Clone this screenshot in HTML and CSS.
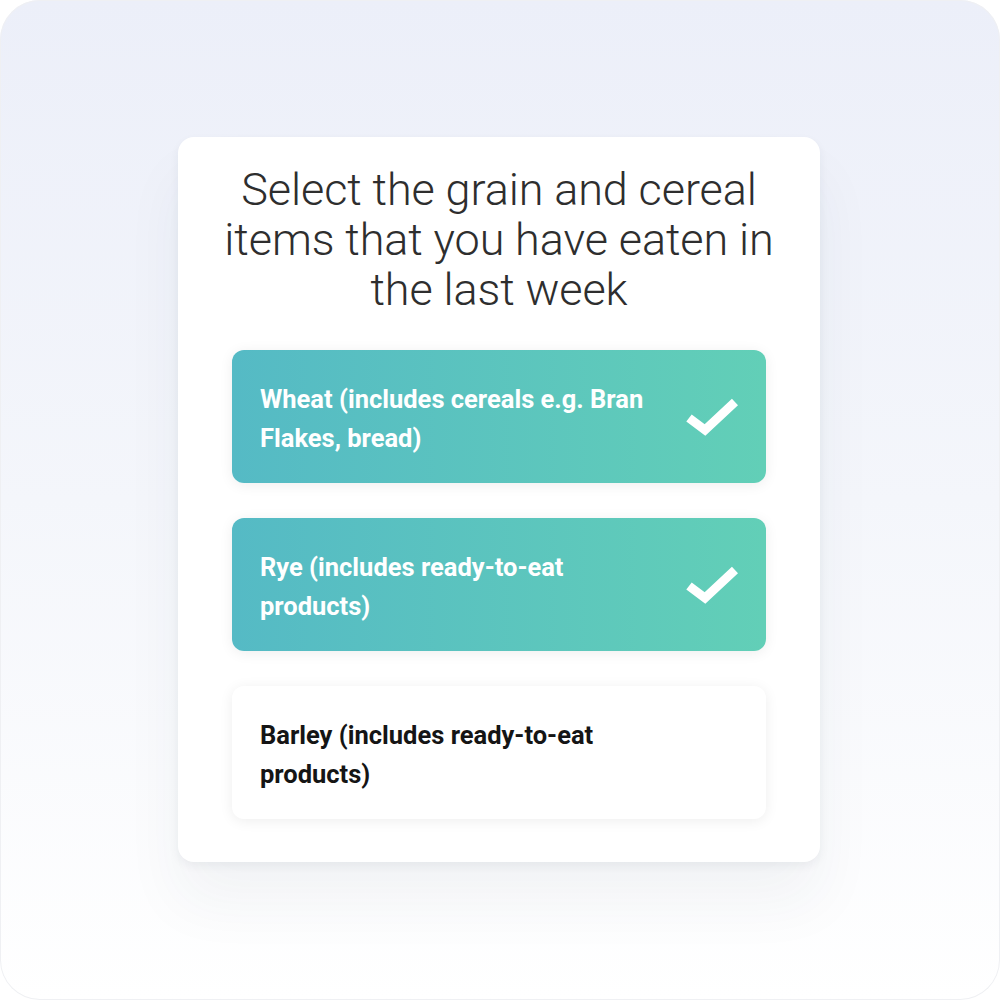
FILE: index.html
```html
<!DOCTYPE html>
<html lang="en">
<head>
<meta charset="utf-8">
<title>Grain and cereal</title>
<link rel="stylesheet" href="styles.css">
</head>
<body>
<div class="frame">
  <div class="card">
    <h1 class="title">Select the grain and cereal items that you have eaten in the last week</h1>
    <div class="options">
      <div class="option selected">
        <span class="label">Wheat (includes cereals e.g. Bran Flakes, bread)</span>
        <svg class="check" viewBox="0 0 52 42" width="52" height="42"><path d="M3 22 L19 34 L49 6" fill="none" stroke="#fff" stroke-width="9" stroke-linejoin="miter" stroke-linecap="butt"/></svg>
      </div>
      <div class="option selected">
        <span class="label">Rye (includes ready-to-eat products)</span>
        <svg class="check" viewBox="0 0 52 42" width="52" height="42"><path d="M3 22 L19 34 L49 6" fill="none" stroke="#fff" stroke-width="9" stroke-linejoin="miter" stroke-linecap="butt"/></svg>
      </div>
      <div class="option">
        <span class="label">Barley (includes ready-to-eat products)</span>
      </div>
    </div>
  </div>
</div>
</body>
</html>
```
FILE: styles.css
```css
html, body {
  margin: 0;
  padding: 0;
  background: #fff;
}
.frame {
  width: 1000px;
  height: 1000px;
  box-sizing: border-box;
  border-radius: 40px;
  box-shadow: inset 0 0 0 1px #eff0f3;
  background: linear-gradient(180deg, #eceff9 0%, #f4f6fb 50%, #ffffff 100%);
  display: flex;
  justify-content: center;
  padding: 137px 2px 0 0;
  font-family: Roboto, "Liberation Sans", sans-serif;
}
.card {
  width: 642px;
  height: 725px;
  box-sizing: border-box;
  background: #fff;
  border-radius: 16px;
  padding: 28px 54px 43px;
  box-shadow: 0 4px 10px rgba(40, 50, 70, 0.06), 0 40px 60px rgba(40, 50, 70, 0.05);
}
.title {
  margin: 0 -20px 35px;
  font-weight: 300;
  font-size: 45px;
  line-height: 50px;
  color: #2e2e2e;
  text-align: center;
  letter-spacing: -0.1px;
}
.options {
  display: flex;
  flex-direction: column;
  gap: 35px;
}
.option {
  height: 133px;
  box-sizing: border-box;
  border-radius: 12px;
  background: #fff;
  box-shadow: 0 2px 14px rgba(0, 0, 0, 0.07);
  display: flex;
  align-items: center;
  justify-content: space-between;
  padding: 4px 28px 0 28px;
}
.option.selected {
  background: linear-gradient(90deg, #55bac5 0%, #62cfb7 100%);
}
.label {
  width: 405px;
  font-weight: 700;
  font-size: 25.5px;
  line-height: 39px;
  color: #151515;
}
.selected .label {
  color: #fff;
}
.check {
  display: block;
  margin-top: -4px;
}
```
